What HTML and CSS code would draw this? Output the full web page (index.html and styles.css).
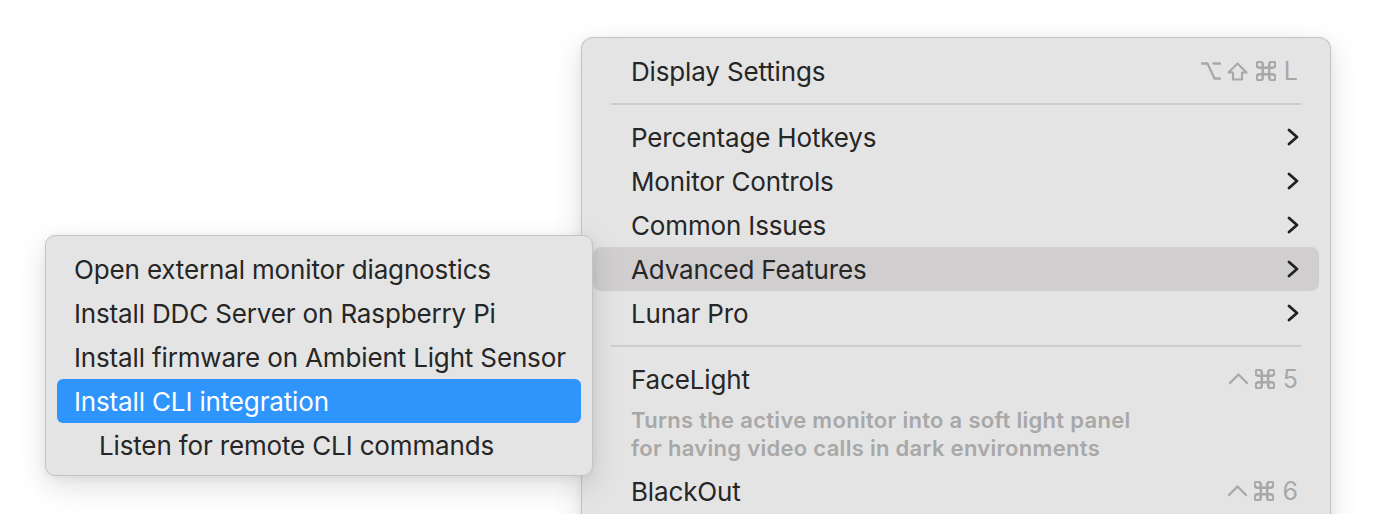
FILE: index.html
```html
<!DOCTYPE html>
<html>
<head>
<meta charset="utf-8">
<link rel="stylesheet" href="styles.css">
</head>
<body>
<div class="stage">
  <div class="menu main">
    <div class="row"><span class="label">Display Settings</span><span class="keys">
      <svg class="k k-opt" viewBox="0 0 20 18"><path d="M1 1.5 H6.5 L13.5 16.5 H19 M12.5 1.5 H19"/></svg>
      <svg class="k k-shift" viewBox="0 0 21 19"><path d="M10.5 1.5 L19.5 10.5 H15 V17.5 H6 V10.5 H1.5 Z"/></svg>
      <svg class="k k-cmd" viewBox="2.6 2.6 18.8 18.8"><path d="M15 6v12a3 3 0 1 0 3-3H6a3 3 0 1 0 3 3V6a3 3 0 1 0-3 3h12a3 3 0 1 0-3-3"/></svg>
      <span class="kc">L</span></span></div>
    <div class="sep"></div>
    <div class="row"><span class="label">Percentage Hotkeys</span><svg class="chev" viewBox="0 0 12 18"><path d="M2 2 L10 9 L2 16"/></svg></div>
    <div class="row"><span class="label">Monitor Controls</span><svg class="chev" viewBox="0 0 12 18"><path d="M2 2 L10 9 L2 16"/></svg></div>
    <div class="row"><span class="label">Common Issues</span><svg class="chev" viewBox="0 0 12 18"><path d="M2 2 L10 9 L2 16"/></svg></div>
    <div class="row open"><span class="label">Advanced Features</span><svg class="chev" viewBox="0 0 12 18"><path d="M2 2 L10 9 L2 16"/></svg></div>
    <div class="row"><span class="label">Lunar Pro</span><svg class="chev" viewBox="0 0 12 18"><path d="M2 2 L10 9 L2 16"/></svg></div>
    <div class="sep"></div>
    <div class="row"><span class="label">FaceLight</span><span class="keys">
      <svg class="k k-ctrl" viewBox="0 0 19 18"><path d="M1 13 L9.5 4.5 L18 13"/></svg>
      <svg class="k k-cmd" viewBox="2.6 2.6 18.8 18.8"><path d="M15 6v12a3 3 0 1 0 3-3H6a3 3 0 1 0 3 3V6a3 3 0 1 0-3 3h12a3 3 0 1 0-3-3"/></svg>
      <span class="kc">5</span></span></div>
    <div class="desc">Turns the active monitor into a soft light panel<br>for having video calls in dark environments</div>
    <div class="row"><span class="label">BlackOut</span><span class="keys">
      <svg class="k k-ctrl" viewBox="0 0 19 18"><path d="M1 13 L9.5 4.5 L18 13"/></svg>
      <svg class="k k-cmd" viewBox="2.6 2.6 18.8 18.8"><path d="M15 6v12a3 3 0 1 0 3-3H6a3 3 0 1 0 3 3V6a3 3 0 1 0-3 3h12a3 3 0 1 0-3-3"/></svg>
      <span class="kc">6</span></span></div>
  </div>
  <div class="menu sub">
    <div class="row"><span class="label">Open external monitor diagnostics</span></div>
    <div class="row"><span class="label">Install DDC Server on Raspberry Pi</span></div>
    <div class="row"><span class="label">Install firmware on Ambient Light Sensor</span></div>
    <div class="row active"><span class="label">Install CLI integration</span></div>
    <div class="row indent"><span class="label">Listen for remote CLI commands</span></div>
  </div>
</div>
</body>
</html>
```

FILE: styles.css
```css
* { box-sizing: border-box; }
html, body { margin: 0; padding: 0; background: #ffffff; overflow: hidden; }
body { width: 1376px; height: 514px; font-family: Inter, "Noto Sans", sans-serif; color: #262626; }
.stage { position: relative; width: 1376px; height: 514px; padding: 37px 0 0 581px; overflow: hidden; }

.menu {
  background: #e4e4e4;
  border: 1px solid #c4c4c4;
  border-radius: 12px;
  box-shadow: 0 10px 30px rgba(0,0,0,0.13), 0 2px 8px rgba(0,0,0,0.06);
}
.main {
  width: 750px;
  height: 520px;
  padding: 11px 11px 0 11px;
  border-bottom: none;
  border-radius: 12px 12px 0 0;
}
.row {
  height: 44px;
  display: flex;
  align-items: center;
  justify-content: space-between;
  padding: 0 20px 0 38px;
  border-radius: 8px;
  font-size: 26px;
  letter-spacing: -0.15px;
  white-space: nowrap;
}
.row.open { background: #d0cecf; }
.sep {
  height: 22px;
  display: flex;
  align-items: center;
  margin: 0 18px;
}
.sep::before { content: ""; flex: 1; height: 2px; background: #cdcdcd; }

.keys { display: flex; align-items: center; color: #a8a8a8; margin-right: 1px; letter-spacing: 0; }
.k { fill: none; stroke: #a8a8a8; stroke-linecap: round; stroke-linejoin: round; flex: none; }
.k-opt { width: 20px; height: 18px; stroke-width: 2.3; margin-right: 6px; }
.k-shift { width: 21px; height: 19px; stroke-width: 2.1; margin-right: 8px; }
.k-cmd { width: 20px; height: 20px; stroke-width: 2.4; margin-right: 8px; }
.k-ctrl { width: 19px; height: 18px; stroke-width: 2.3; margin-right: 7px; }
.kc { font-size: 25px; line-height: 1; }

.chev { width: 12px; height: 18px; fill: none; stroke: #222; stroke-width: 2.8; stroke-linecap: round; stroke-linejoin: round; }
.desc {
  padding: 5px 0 7px 38px;
  font-size: 22px;
  line-height: 28px;
  font-weight: 600;
  color: #a8a8a8;
  letter-spacing: 0.3px;
}

.sub {
  position: absolute;
  left: 45px;
  top: 235px;
  width: 548px;
  height: 241px;
  padding: 11px 11px 9px 11px;
  border-radius: 10px;
}
.sub .row { padding: 0 17px; border-radius: 6px; }
.sub .row.active { background: #2e95fd; color: #ffffff; }
.sub .row.indent { padding-left: 42px; }
```
